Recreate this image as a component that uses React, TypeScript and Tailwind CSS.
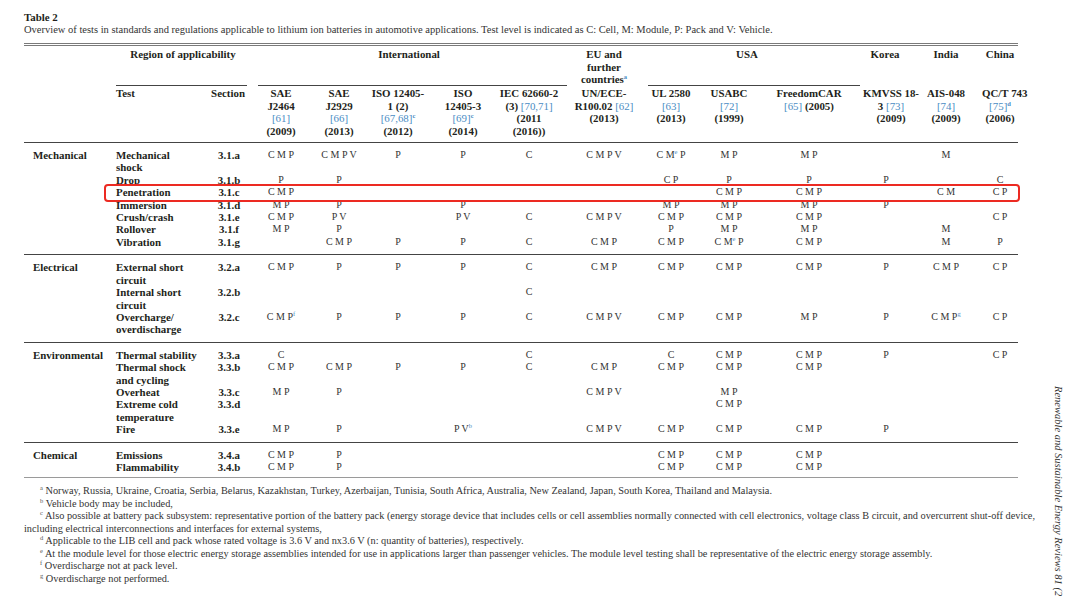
import React from "react";

const BLUE = "text-[#4a8cc4]";

// header template: category, test, section, then 12 standards
const HEAD_COLS =
  "grid grid-cols-[92px_92px_42px_62px_54px_64px_66px_66px_84px_50px_66px_94px_66px_48px_48px]";
// body template: same minus the category column
const ROW_COLS =
  "grid grid-cols-[92px_42px_62px_54px_64px_66px_66px_84px_50px_66px_94px_66px_48px_48px]";

type Row = {
  test: React.ReactNode;
  section: string;
  cells: string[];
  mark?: boolean;
};

type Group = { name: string; rows: Row[] };

const GROUPS: Group[] = [
  {
    name: "Mechanical",
    rows: [
      {
        test: <>Mechanical<br />shock</>,
        section: "3.1.a",
        cells: ["C M P", "C M P V", "P", "P", "C", "C M P V", "C M^e P", "M P", "M P", "", "M", ""],
      },
      { test: "Drop", section: "3.1.b", cells: ["P", "P", "", "", "", "", "C P", "P", "P", "P", "", "C"] },
      {
        test: "Penetration",
        section: "3.1.c",
        cells: ["C M P", "", "", "", "", "", "", "C M P", "C M P", "", "C M", "C P"],
        mark: true,
      },
      { test: "Immersion", section: "3.1.d", cells: ["M P", "P", "", "P", "", "", "M P", "M P", "M P", "P", "", ""] },
      {
        test: "Crush/crash",
        section: "3.1.e",
        cells: ["C M P", "P V", "", "P V", "C", "C M P V", "C M P", "C M P", "C M P", "", "", "C P"],
      },
      { test: "Rollover", section: "3.1.f", cells: ["M P", "P", "", "", "", "", "P", "M P", "M P", "", "M", ""] },
      {
        test: "Vibration",
        section: "3.1.g",
        cells: ["", "C M P", "P", "P", "C", "C M P", "C M P", "C M^e P", "C M P", "", "M", "P"],
      },
    ],
  },
  {
    name: "Electrical",
    rows: [
      {
        test: <>External short<br />circuit</>,
        section: "3.2.a",
        cells: ["C M P", "P", "P", "P", "C", "C M P", "C M P", "C M P", "C M P", "P", "C M P", "C P"],
      },
      {
        test: <>Internal short<br />circuit</>,
        section: "3.2.b",
        cells: ["", "", "", "", "C", "", "", "", "", "", "", ""],
      },
      {
        test: <>Overcharge/<br />overdischarge</>,
        section: "3.2.c",
        cells: ["C M P^f", "P", "P", "P", "C", "C M P V", "C M P", "C M P", "M P", "P", "C M P^g", "C P"],
      },
    ],
  },
  {
    name: "Environmental",
    rows: [
      {
        test: "Thermal stability",
        section: "3.3.a",
        cells: ["C", "", "", "", "C", "", "C", "C M P", "C M P", "P", "", "C P"],
      },
      {
        test: <>Thermal shock<br />and cycling</>,
        section: "3.3.b",
        cells: ["C M P", "C M P", "P", "P", "C", "C M P", "C M P", "C M P", "C M P", "", "", ""],
      },
      { test: "Overheat", section: "3.3.c", cells: ["M P", "P", "", "", "", "C M P V", "", "M P", "", "", "", ""] },
      {
        test: <>Extreme cold<br />temperature</>,
        section: "3.3.d",
        cells: ["", "", "", "", "", "", "", "C M P", "", "", "", ""],
      },
      {
        test: "Fire",
        section: "3.3.e",
        cells: ["M P", "P", "", "P V^b", "", "C M P V", "C M P", "C M P", "C M P", "P", "", ""],
      },
    ],
  },
  {
    name: "Chemical",
    rows: [
      { test: "Emissions", section: "3.4.a", cells: ["C M P", "P", "", "", "", "", "C M P", "C M P", "C M P", "", "", ""] },
      {
        test: "Flammability",
        section: "3.4.b",
        cells: ["C M P", "P", "", "", "", "", "C M P", "C M P", "C M P", "", "", ""],
      },
    ],
  },
];

function Sup({ children, blue }: { children: React.ReactNode; blue?: boolean }) {
  return (
    <span className={`relative -top-[4px] text-[6.5px] leading-none ${blue ? BLUE : "text-[#555]"}`}>
      {children}
    </span>
  );
}

// "C M^e P" -> C M<sup>e</sup> P
function Value({ v }: { v: string }) {
  const parts = v.split(/\^(\w)/);
  return (
    <>
      {parts.map((p, i) =>
        i % 2 === 1 ? (
          <Sup key={i} blue>
            {p}
          </Sup>
        ) : (
          <React.Fragment key={i}>{p}</React.Fragment>
        )
      )}
    </>
  );
}

function Ref({ children }: { children: React.ReactNode }) {
  return <span className={`font-normal ${BLUE}`}>{children}</span>;
}

function Header() {
  return (
    <div className="font-bold text-[10.9px] leading-[12.4px] text-[#231f20]">
      <div className={`${HEAD_COLS} h-[30px] pt-[2px]`}>
        <div />
        <div className="col-span-2 flex flex-col text-center">
          <span>Region of applicability</span>
          <div className="mt-auto mr-[3px] border-b border-[#444]" />
        </div>
        <div className="col-span-5 flex flex-col text-center">
          <span className="pl-[6px]">International</span>
          <div className="mt-auto ml-[8px] -mr-[5px] border-b border-[#444]" />
        </div>
        <div className="text-center">
          EU and
          <br />
          further
          <br />
          countries<Sup blue>a</Sup>
        </div>
        <div className="col-span-3 flex flex-col text-center">
          <span className="pr-[8px]">USA</span>
          <div className="mt-auto ml-[2px] -mr-[4px] border-b border-[#444]" />
        </div>
        <div className="text-center pr-[8px]">Korea</div>
        <div className="text-center">India</div>
        <div className="text-center pl-[12px]">China</div>
      </div>

      <div className={`${HEAD_COLS} pt-[11px] pb-[5px] border-b border-[#444] text-center`}>
        <div />
        <div className="text-left">Test</div>
        <div className="text-right pr-[5px]">Section</div>
        <div>
          SAE
          <br />
          J2464
          <br />
          <Ref>[61]</Ref>
          <br />
          (2009)
        </div>
        <div>
          SAE
          <br />
          J2929
          <br />
          <Ref>[66]</Ref>
          <br />
          (2013)
        </div>
        <div className="whitespace-nowrap">
          ISO 12405-
          <br />
          1 (2)
          <br />
          <Ref>[67,68]</Ref>
          <Sup blue>c</Sup>
          <br />
          (2012)
        </div>
        <div>
          ISO
          <br />
          12405-3
          <br />
          <Ref>[69]</Ref>
          <Sup blue>c</Sup>
          <br />
          (2014)
        </div>
        <div className="whitespace-nowrap">
          IEC 62660-2
          <br />
          (3) <Ref>[70,71]</Ref>
          <br />
          (2011
          <br />
          (2016))
        </div>
        <div className="whitespace-nowrap">
          UN/ECE-
          <br />
          R100.02 <Ref>[62]</Ref>
          <br />
          (2013)
        </div>
        <div className="whitespace-nowrap">
          UL 2580
          <br />
          <Ref>[63]</Ref>
          <br />
          (2013)
        </div>
        <div>
          USABC
          <br />
          <Ref>[72]</Ref>
          <br />
          (1999)
        </div>
        <div className="whitespace-nowrap">
          FreedomCAR
          <br />
          <Ref>[65]</Ref> (2005)
        </div>
        <div className="whitespace-nowrap pl-[4px]">
          KMVSS 18-
          <br />
          3 <Ref>[73]</Ref>
          <br />
          (2009)
        </div>
        <div className="whitespace-nowrap">
          AIS-048
          <br />
          <Ref>[74]</Ref>
          <br />
          (2009)
        </div>
        <div className="whitespace-nowrap pl-[12px]">
          QC/T 743
          <br />
          <Ref>[75]</Ref>
          <Sup blue>d</Sup>
          <br />
          (2006)
        </div>
      </div>
    </div>
  );
}

function BodyRow({ row }: { row: Row }) {
  return (
    <div className={`${ROW_COLS} ${row.mark ? "relative z-10" : ""} leading-[12.4px]`}>
      {row.mark && (
        <div className="absolute -left-[12px] -right-[2px] -top-[2px] -bottom-[3px] -z-10 rounded-[4px] border-[2.5px] border-[#ec2a22] bg-white" />
      )}
      <div className="font-bold text-[10.9px] whitespace-nowrap text-[#231f20]">{row.test}</div>
      <div className="font-bold text-[10.9px] text-center text-[#231f20]">{row.section}</div>
      {row.cells.map((c, i) => (
        <div
          key={i}
          className={`text-center whitespace-nowrap text-[10px] text-[#333] ${i === 11 ? "pl-[12px]" : ""} ${
            i === 9 ? "pr-[6px]" : ""
          }`}
        >
          <Value v={c} />
        </div>
      ))}
    </div>
  );
}

const NOTES: { k: string; t: React.ReactNode }[] = [
  {
    k: "a",
    t: "Norway, Russia, Ukraine, Croatia, Serbia, Belarus, Kazakhstan, Turkey, Azerbaijan, Tunisia, South Africa, Australia, New Zealand, Japan, South Korea, Thailand and Malaysia.",
  },
  { k: "b", t: "Vehicle body may be included," },
  {
    k: "c",
    t: (
      <>
        Also possible at battery pack subsystem: representative portion of the battery pack (energy storage device that
        includes cells or cell assemblies normally connected with cell electronics, voltage class B circuit, and
        overcurrent shut-off device,
        <br />
        including electrical interconnections and interfaces for external systems,
      </>
    ),
  },
  {
    k: "d",
    t: "Applicable to the LIB cell and pack whose rated voltage is 3.6 V and nx3.6 V (n: quantity of batteries), respectively.",
  },
  {
    k: "e",
    t: "At the module level for those electric energy storage assemblies intended for use in applications larger than passenger vehicles. The module level testing shall be representative of the electric energy storage assembly.",
  },
  { k: "f", t: "Overdischarge not at pack level." },
  { k: "g", t: "Overdischarge not performed." },
];

export default function App() {
  return (
    <div className="flex h-[596px] w-[1080px] overflow-hidden bg-white font-['Liberation_Serif','Times_New_Roman',serif] text-[#231f20]">
      <div className="w-[1040px] shrink-0 pl-[24px] pt-[11px]">
        <div className="text-[10.9px] font-bold leading-[12.4px]">Table 2</div>
        <div className="text-[10.5px] leading-[13px] text-[#333] whitespace-nowrap">
          Overview of tests in standards and regulations applicable to lithium ion batteries in automotive applications.
          Test level is indicated as C: Cell, M: Module, P: Pack and V: Vehicle.
        </div>

        <div className="mt-[7px] w-[994px] border-t-[3px] border-double border-[#7a7a7a]">
          <Header />

          {GROUPS.map((g, gi) => (
            <div
              key={g.name}
              className={`flex pt-[6px] ${gi === GROUPS.length - 1 ? "pb-[4px] border-b border-[#9a9a9a]" : "pb-[6px] border-b border-[#444]"}`}
            >
              <div className="w-[92px] shrink-0 pl-[9px] font-bold text-[10.9px] leading-[12.4px]">{g.name}</div>
              <div className="flex flex-col">
                {g.rows.map((r, ri) => (
                  <BodyRow key={ri} row={r} />
                ))}
              </div>
            </div>
          ))}
        </div>

        <div className="mt-[7px] w-[1016px] whitespace-nowrap text-[10.3px] leading-[12.5px] text-[#333]">
          {NOTES.map((n) => (
            <p key={n.k} className="indent-[16px]">
              <Sup>{n.k}</Sup> {n.t}
            </p>
          ))}
        </div>
      </div>

      <div className="pt-[386px] pl-[10px]">
        <div className="[writing-mode:vertical-rl] whitespace-nowrap text-[10.5px] italic text-[#333]">
          Renewable and Sustainable Energy Reviews 81 (2018) 1427–1452
        </div>
      </div>
    </div>
  );
}
